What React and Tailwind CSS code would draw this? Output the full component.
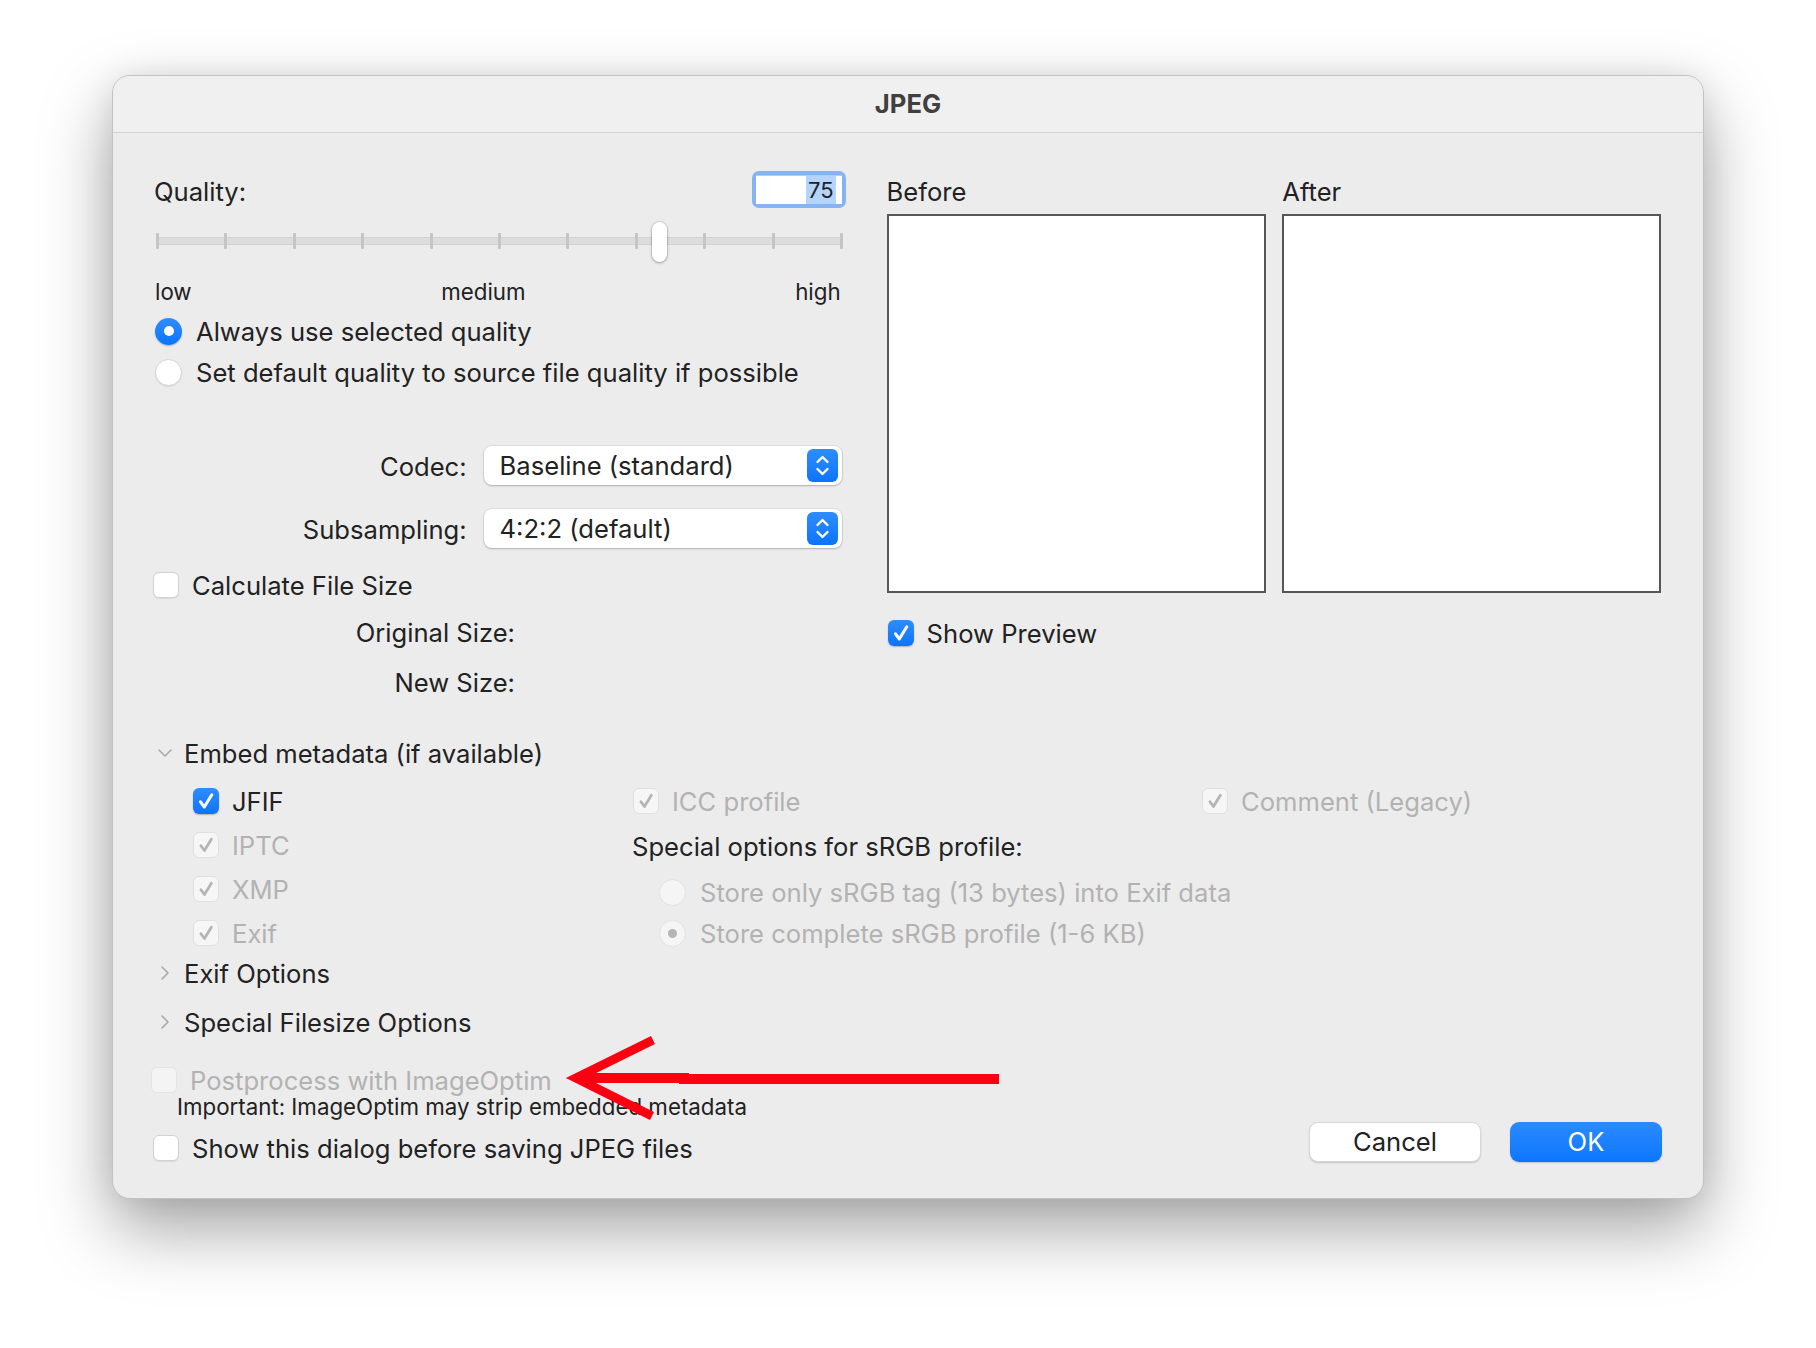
import React from 'react';

function CheckMark({ color }) {
  return (
    <svg viewBox="0 0 26 26" className="w-[26px] h-[26px]">
      <path d="M7.5 13.8 L11.3 19 L18.8 6.8" fill="none" stroke={color} strokeWidth="3" strokeLinecap="round" strokeLinejoin="round" />
    </svg>
  );
}

function Checkbox({ checked = false, disabled = false }) {
  if (checked && !disabled) {
    return (
      <span className="flex items-center justify-center w-[26px] h-[26px] shrink-0 rounded-[6px] bg-linear-to-b from-[#2d8dff] to-[#0a74fb] shadow-[0_1px_1.5px_rgba(0,0,0,0.25)]">
        <CheckMark color="#ffffff" />
      </span>
    );
  }
  if (checked && disabled) {
    return (
      <span className="flex items-center justify-center w-[26px] h-[26px] shrink-0 rounded-[6px] bg-[#f6f6f6] border border-[#e0e0e0]">
        <CheckMark color="#b4b4b4" />
      </span>
    );
  }
  if (disabled) {
    return <span className="w-[26px] h-[26px] shrink-0 rounded-[6px] bg-[#f4f4f4] border border-[#e4e4e4]" />;
  }
  return <span className="w-[26px] h-[26px] shrink-0 rounded-[6px] bg-white border border-[#d2d2d2] shadow-[0_1px_1px_rgba(0,0,0,0.08)]" />;
}

function Radio({ selected = false, disabled = false }) {
  if (selected && !disabled) {
    return (
      <span className="flex items-center justify-center w-[27px] h-[27px] shrink-0 rounded-full bg-linear-to-b from-[#2d8dff] to-[#0a74fb] shadow-[0_1px_1.5px_rgba(0,0,0,0.25)]">
        <span className="w-[10px] h-[10px] rounded-full bg-white" />
      </span>
    );
  }
  if (disabled) {
    return (
      <span className="flex items-center justify-center w-[27px] h-[27px] shrink-0 rounded-full bg-[#f5f5f5] border border-[#e2e2e2]">
        {selected && <span className="w-[9px] h-[9px] rounded-full bg-[#b5b5b5]" />}
      </span>
    );
  }
  return <span className="w-[27px] h-[27px] shrink-0 rounded-full bg-white border border-[#d4d4d4] shadow-[0_1px_1px_rgba(0,0,0,0.08)]" />;
}

function ChevronDown() {
  return (
    <svg viewBox="0 0 16 10" className="w-[16px] h-[10px]">
      <path d="M2 2 L8 8 L14 2" fill="none" stroke="#a8a8a8" strokeWidth="1.6" strokeLinecap="round" strokeLinejoin="round" />
    </svg>
  );
}

function ChevronRight() {
  return (
    <svg viewBox="0 0 10 16" className="w-[10px] h-[16px]">
      <path d="M2 2 L8 8 L2 14" fill="none" stroke="#a8a8a8" strokeWidth="1.6" strokeLinecap="round" strokeLinejoin="round" />
    </svg>
  );
}

function Select({ value }) {
  return (
    <div className="flex items-center justify-between w-[358px] h-[39px] pl-[16px] pr-[4px] rounded-[8px] bg-white shadow-[0_0_0_1px_rgba(0,0,0,0.06),0_1px_2px_rgba(0,0,0,0.22)]">
      <span>{value}</span>
      <span className="flex items-center justify-center w-[31px] h-[33px] rounded-[6px] bg-linear-to-b from-[#2d8dff] to-[#0a74fb]">
        <svg viewBox="0 0 31 33" className="w-[31px] h-[33px]">
          <path d="M10.5 13 L15.5 8 L20.5 13" fill="none" stroke="white" strokeWidth="2.4" strokeLinecap="round" strokeLinejoin="round" />
          <path d="M10.5 20 L15.5 25 L20.5 20" fill="none" stroke="white" strokeWidth="2.4" strokeLinecap="round" strokeLinejoin="round" />
        </svg>
      </span>
    </div>
  );
}

function CheckRow({ label, checked, disabled, className = '' }) {
  return (
    <div className={`flex items-center gap-[13px] h-[28px] whitespace-nowrap ${className}`}>
      <Checkbox checked={checked} disabled={disabled} />
      <span className={`pt-[2px] ${disabled ? 'text-[#b2b2b2]' : ''}`}>{label}</span>
    </div>
  );
}

function RadioRow({ label, selected, disabled, className = '' }) {
  return (
    <div className={`flex items-center gap-[14px] h-[28px] whitespace-nowrap ${className}`}>
      <Radio selected={selected} disabled={disabled} />
      <span className={`pt-[2px] ${disabled ? 'text-[#b2b2b2]' : ''}`}>{label}</span>
    </div>
  );
}

export default function App() {
  const ticks = Array.from({ length: 11 }, (_, i) => i);

  return (
    <div className="relative w-[1816px] h-[1348px] bg-white pt-[75px] pl-[112px] font-[Inter,sans-serif] text-[25.6px] leading-none text-[#222222]">
      <div className="flex flex-col w-[1592px] h-[1124px] rounded-[18px] bg-[#ececec] border border-[#c2c2c2] shadow-[0_30px_70px_rgba(0,0,0,0.36),0_0_30px_rgba(0,0,0,0.08)] overflow-hidden">
        {/* title bar */}
        <div className="flex items-center justify-center h-[57px] shrink-0 bg-[#f0f0f0] border-b border-[#d3d3d3]">
          <span className="font-bold text-[#404040]">JPEG</span>
        </div>

        <div className="flex flex-col px-[42px]">
          <div className="flex gap-[41px]">
            {/* left column */}
            <div className="flex flex-col w-[692px]">
              <div className="flex items-center justify-between h-[37px] mt-[38px]">
                <span className="ml-[-1px] pt-[5px]">Quality:</span>
                <div className="w-[94px] h-[37px] rounded-[7px] bg-[#86b3f2] p-[4px]">
                  <div className="flex items-center justify-end h-full bg-white border-t border-[#c8c8c8] pr-[6px] text-[22px]">
                    <span className="bg-[#b3d4fd] px-[2px] py-[3px]">75</span>
                  </div>
                </div>
              </div>

              <div className="relative w-[687px] h-[40px] mt-[14px] ml-[1px]">
                <div className="absolute left-0 right-0 top-[15px] h-[8px] rounded-full bg-[#dddddd] border border-[#d3d3d3]" />
                <div className="absolute left-0 right-0 top-[11px] h-[16px] flex justify-between">
                  {ticks.map(i => (
                    <span key={i} className="w-[3px] h-full rounded-[1px] bg-[#c5c5c5]" />
                  ))}
                </div>
                <div className="absolute top-0 left-[496px] w-[15px] h-[40px] rounded-full bg-white shadow-[0_0_0_1px_rgba(0,0,0,0.08),0_1px_3px_rgba(0,0,0,0.3)]" />
              </div>

              <div className="flex items-center justify-between h-[24px] mt-[18px] text-[22.3px] pr-[5px]">
                <span>low</span>
                <span className="ml-[-20px]">medium</span>
                <span>high</span>
              </div>

              <RadioRow label="Always use selected quality" selected className="mt-[13px]" />
              <RadioRow label="Set default quality to source file quality if possible" className="mt-[13px]" />

              <div className="flex items-center justify-end gap-[17px] h-[39px] mt-[60px] pr-[4px]">
                <span className="pt-[2px]">Codec:</span>
                <Select value="Baseline (standard)" />
              </div>
              <div className="flex items-center justify-end gap-[17px] h-[39px] mt-[24px] pr-[4px]">
                <span className="pt-[2px]">Subsampling:</span>
                <Select value="4:2:2 (default)" />
              </div>

              <CheckRow label="Calculate File Size" className="mt-[23px] ml-[-2px]" />
              <div className="flex items-center justify-end w-[360px] h-[28px] mt-[19px] pt-[2px]">Original Size:</div>
              <div className="flex items-center justify-end w-[360px] h-[28px] mt-[22px] pt-[2px]">New Size:</div>
            </div>

            {/* right column: previews */}
            <div className="flex flex-col w-[776px]">
              <div className="grid grid-cols-2 gap-[17px]">
                <div className="flex flex-col">
                  <div className="flex items-center h-[37px] mt-[38px] pt-[5px]">Before</div>
                  <div className="w-[379px] h-[379px] mt-[6px] bg-white border-2 border-[#575757]" />
                </div>
                <div className="flex flex-col">
                  <div className="flex items-center h-[37px] mt-[38px] pt-[5px]">After</div>
                  <div className="w-[379px] h-[379px] mt-[6px] bg-white border-2 border-[#575757]" />
                </div>
              </div>
              <CheckRow label="Show Preview" checked className="mt-[26px] ml-[1px]" />
            </div>
          </div>

          {/* metadata */}
          <div className="flex items-center gap-[11px] h-[28px] mt-[43px] pl-[2px]">
            <ChevronDown />
            <span className="pt-[2px]">Embed metadata (if available)</span>
          </div>

          <div className="flex mt-[12px] pl-[38px]">
            <div className="flex flex-col w-[439px]">
              <div className="flex items-center h-[44px]"><CheckRow label="JFIF" checked /></div>
              <div className="flex items-center h-[44px]"><CheckRow label="IPTC" checked disabled /></div>
              <div className="flex items-center h-[44px]"><CheckRow label="XMP" checked disabled /></div>
              <div className="flex items-center h-[44px]"><CheckRow label="Exif" checked disabled /></div>
            </div>
            <div className="flex flex-col w-[570px]">
              <div className="flex items-center h-[44px] pl-[1px]"><CheckRow label="ICC profile" checked disabled /></div>
              <div className="flex items-center h-[44px] pt-[3px] whitespace-nowrap">Special options for sRGB profile:</div>
              <div className="flex items-center h-[44px] pl-[27px] pt-[6px]"><RadioRow label="Store only sRGB tag (13 bytes) into Exif data" disabled /></div>
              <div className="flex items-center h-[44px] pl-[27px]"><RadioRow label="Store complete sRGB profile (1-6 KB)" selected disabled /></div>
            </div>
            <div className="flex flex-col">
              <div className="flex items-center h-[44px]"><CheckRow label="Comment (Legacy)" checked disabled /></div>
            </div>
          </div>

          <div className="flex items-center gap-[14px] h-[28px] mt-[4px] pl-[5px]">
            <ChevronRight />
            <span className="pt-[2px]">Exif Options</span>
          </div>
          <div className="flex items-center gap-[14px] h-[28px] mt-[21px] pl-[5px]">
            <ChevronRight />
            <span className="pt-[2px]">Special Filesize Options</span>
          </div>

          {/* bottom */}
          <div className="flex items-end justify-between mt-[30px]">
            <div className="flex flex-col">
              <CheckRow label="Postprocess with ImageOptim" disabled className="ml-[-4px]" />
              <div className="flex items-center h-[24px] pl-[22px] pt-[2px] text-[22.3px]">Important: ImageOptim may strip embedded metadata</div>
              <CheckRow label="Show this dialog before saving JPEG files" className="mt-[16px] ml-[-2px]" />
            </div>
            <div className="flex items-center gap-[29px] mr-[-1px]">
              <button className="w-[172px] h-[40px] rounded-[9px] bg-white border border-[#d8d8d8] shadow-[0_1px_1.5px_rgba(0,0,0,0.18)] text-[#222222]">Cancel</button>
              <button className="w-[152px] h-[40px] rounded-[9px] bg-linear-to-b from-[#2a8bff] to-[#0a76fd] text-white shadow-[0_1px_1.5px_rgba(0,0,0,0.18)]">OK</button>
            </div>
          </div>
        </div>
      </div>

      {/* red annotation arrow */}
      <svg className="absolute left-0 top-0 pointer-events-none" width="1816" height="1348">
        <path d="M580 1078 L684 1078 L684 1079 L895 1079 L999 1079" fill="none" stroke="#fb0011" strokeWidth="10" />
        <path d="M653 1040 L576 1078 L652 1116" fill="none" stroke="#fb0011" strokeWidth="9" strokeLinejoin="miter" />
      </svg>
    </div>
  );
}
